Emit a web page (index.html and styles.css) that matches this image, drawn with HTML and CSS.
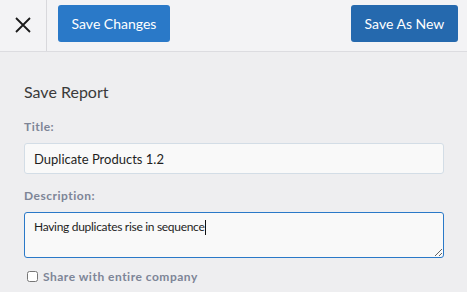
FILE: index.html
```html
<!DOCTYPE html>
<html>
<head>
    <link rel="stylesheet" href="styles.css">
</head>
<body>
    <div class="toolbar">
        <button class="close-btn" aria-label="Close">
            <svg width="16" height="16" viewBox="0 0 16 16">
                <path d="M1 1 L15 15 M15 1 L1 15" stroke="#1a1a1a" stroke-width="1.8" fill="none"/>
            </svg>
        </button>
        <button class="btn btn-primary">Save Changes</button>
        <div class="spacer"></div>
        <button class="btn btn-dark">Save As New</button>
    </div>

    <div class="form">
        <h2>Save Report</h2>

        <label class="field-label" for="title">Title:</label>
        <input id="title" class="text-input" type="text" value="Duplicate Products 1.2">

        <label class="field-label" for="desc">Description:</label>
        <div class="textarea-wrap">
            <textarea id="desc" class="text-area">Having duplicates rise in sequence</textarea>
            <span class="caret"></span>
        </div>

        <label class="share">
            <input type="checkbox">
            <span>Share with entire company</span>
        </label>
    </div>
</body>
</html>
```

FILE: styles.css
```css
body {
    margin: 0;
    background-color: #eeeef0;
    font-family: Lato, "Open Sans", sans-serif;
    color: #2b2b2b;
}
.toolbar {
    display: flex;
    align-items: center;
    height: 51px;
    background-color: #f3f3f5;
    border-bottom: 1px solid #dcdce0;
}
.close-btn {
    width: 47px;
    height: 51px;
    padding: 0;
    border: none;
    border-right: 1px solid #d8d8dc;
    background: none;
    display: flex;
    align-items: center;
    justify-content: center;
}
.close-btn svg {
    margin-top: -2px;
}
.spacer {
    flex: 1;
}
.btn {
    font-family: Lato, sans-serif;
    font-size: 14px;
    color: #ffffff;
    border: none;
    border-radius: 3px;
    height: 37px;
    padding: 0;
    margin-top: -4px;
    white-space: nowrap;
}
.btn-primary {
    background-color: #2a79c8;
    margin-left: 11px;
    width: 112px;
}
.btn-dark {
    background-color: #2569ae;
    margin-right: 9px;
    width: 107px;
}
.form {
    padding: 30px 23px 0 24px;
}
.form h2 {
    font-size: 16px;
    font-weight: normal;
    color: #3a3a3a;
    margin: 0 0 18px 0;
}
.field-label {
    display: block;
    font-size: 12px;
    font-weight: bold;
    letter-spacing: 0.5px;
    color: #7d8597;
    margin-bottom: 9px;
}
.text-input,
.text-area {
    box-sizing: border-box;
    width: 100%;
    font-family: Lato, sans-serif;
    font-size: 13px;
    color: #1e1e1e;
    background-color: #f9f9f9;
    border: 1px solid #d3dde6;
    border-radius: 3px;
    padding: 0 9px;
    outline: none;
}
.text-input {
    height: 31px;
    margin-bottom: 14px;
}
.textarea-wrap {
    position: relative;
}
.text-area {
    display: block;
    height: 46px;
    padding-top: 6px;
    border-color: #2a79c8;
    resize: vertical;
    font-size: 12px;
    line-height: 16px;
    letter-spacing: -0.3px;
}
.caret {
    position: absolute;
    left: 181px;
    top: 8px;
    width: 1px;
    height: 15px;
    background-color: #111;
}
.share {
    display: flex;
    align-items: center;
    gap: 5px;
    margin-top: 11px;
    font-size: 12px;
    font-weight: bold;
    letter-spacing: 0.5px;
    color: #7d8597;
}
.share input {
    margin: 0 0 0 3px;
    width: 11px;
    height: 11px;
}
```
